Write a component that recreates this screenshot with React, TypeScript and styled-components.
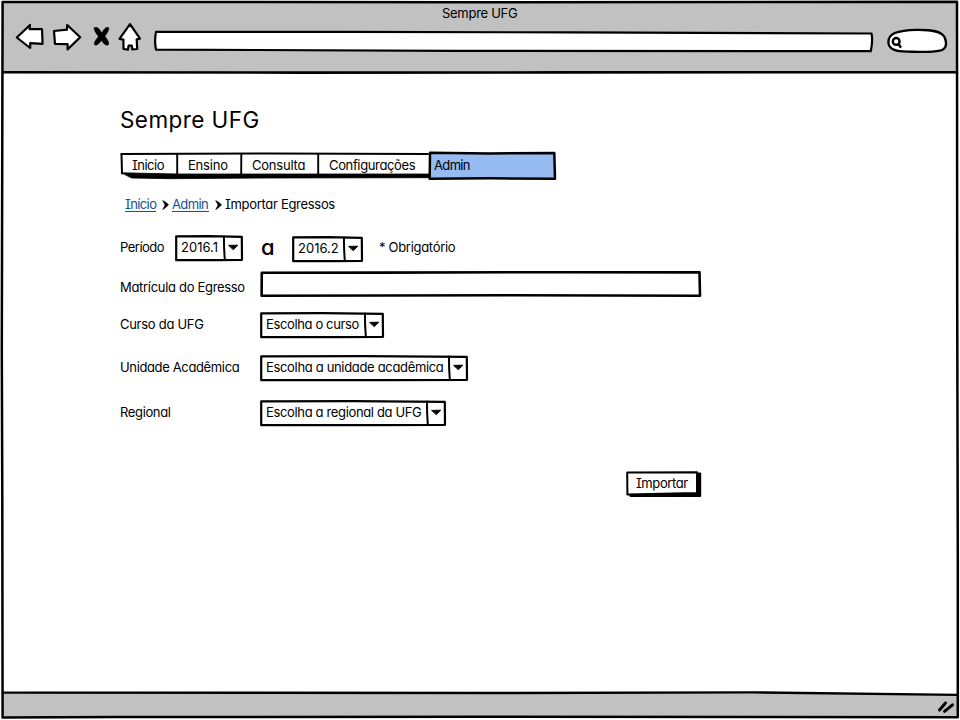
import React from 'react';
import styled, { createGlobalStyle } from 'styled-components';

const GlobalStyle = createGlobalStyle`
  * { box-sizing: border-box; }
  html, body { margin: 0; padding: 0; background: #fff; }
  body {
    font-family: Inter, "Noto Sans", sans-serif;
    font-feature-settings: "cv11", "cv08";
    font-size: 13px;
    line-height: 16px;
    color: #000;
    overflow: hidden;
  }
`;

const Window = styled.div`
  position: relative;
  display: flex;
  flex-direction: column;
  width: 960px;
  height: 720px;
  padding: 2px;
`;

const Ink = styled.svg`
  position: absolute;
  left: 0;
  top: 0;
  width: 100%;
  height: 100%;
  overflow: visible;
  pointer-events: none;
  fill: none;
  stroke: #000;
  stroke-linejoin: round;
  stroke-linecap: round;
`;

const Header = styled.header`
  position: relative;
  height: 70px;
  background: #c1c1c1;
`;

const WindowTitle = styled.div<{ $ls: number }>`
  padding: 3px 0 0 440px;
  letter-spacing: ${p => p.$ls}px;
  white-space: pre;
`;

const Toolbar = styled.div`
  display: flex;
  align-items: flex-start;
  padding: 2px 0 0 13px;
`;

const ToolIcon = styled.svg<{ $gap: number }>`
  flex: none;
  margin-right: ${p => p.$gap}px;
  overflow: visible;
  fill: #fff;
  stroke: #000;
  stroke-width: 2.2;
  stroke-linejoin: round;
  stroke-linecap: round;
`;

const AddressBar = styled.div`
  position: relative;
  width: 720px;
  height: 22px;
  margin: 7px 14px 0 0;
`;

const SearchField = styled.div`
  position: relative;
  width: 60px;
  height: 25px;
  margin-top: 6px;
`;

const Main = styled.main`
  display: flex;
  flex-direction: column;
  flex: 1;
  padding: 34px 0 0 118px;
`;

const Footer = styled.footer`
  position: relative;
  height: 26px;
`;

const Heading = styled.h1`
  margin: 0;
  font-size: 22.5px;
  font-weight: 400;
  line-height: 28px;
  letter-spacing: 0.42px;
  white-space: pre;
`;

const Nav = styled.nav`
  position: relative;
  display: flex;
  width: 436px;
  height: 30px;
  margin-top: 16px;
`;

const Tab = styled.a<{ $w: number; $pad: number; $ls?: number }>`
  position: relative;
  width: ${p => p.$w}px;
  padding: 7px 0 0 ${p => p.$pad}px;
  letter-spacing: ${p => p.$ls ?? 0}px;
  white-space: pre;
`;

const Crumbs = styled.div`
  display: flex;
  height: 16px;
  margin: 16px 0 0 5px;
`;

const Crumb = styled.span<{ $w: number; $link?: boolean; $ls?: number }>`
  flex: none;
  width: ${p => p.$w}px;
  letter-spacing: ${p => p.$ls ?? 0}px;
  color: ${p => (p.$link ? '#11519b' : '#000')};
  height: 16px;
  border-bottom: ${p => (p.$link ? '1px solid #11519b' : '0')};
  white-space: nowrap;
`;

const Separator = styled.svg`
  flex: none;
  width: 7px;
  height: 10px;
  margin: 4px 3px 0 6px;
  fill: #000;
  stroke: #000;
  stroke-width: 0.5;
`;

const Row = styled.div<{ $top: number; $h: number }>`
  display: flex;
  align-items: flex-start;
  height: ${p => p.$h}px;
  margin-top: ${p => p.$top}px;
`;

const Label = styled.label<{ $w: number; $top: number; $left?: number; $ls?: number }>`
  width: ${p => p.$w}px;
  padding: ${p => p.$top}px 0 0 ${p => p.$left ?? 0}px;
  letter-spacing: ${p => p.$ls ?? 0}px;
  white-space: pre;
`;

const Until = styled.span`
  width: 49px;
  padding-left: 18px;
  font-size: 22px;
  font-weight: 500;
  line-height: 24px;
`;

const SelectBox = styled.div<{ $w: number; $ls: number; $drop: number }>`
  position: relative;
  width: ${p => p.$w}px;
  height: 26px;
  margin-top: ${p => p.$drop}px;
  padding: 4px 0 0 6px;
  letter-spacing: ${p => p.$ls}px;
  white-space: pre;
`;

const TextInput = styled.div`
  position: relative;
  width: 441px;
  height: 26px;
`;

const Button = styled.div`
  position: relative;
  width: 76px;
  height: 26px;
  margin: 45px 0 0 506px;
  padding: 4px 0 0 10px;
`;

const ButtonText = styled.span`
  position: relative;
  letter-spacing: -0.4px;
`;

function Select({ w, text, ls = 0, drop = 0 }: { w: number; text: string; ls?: number; drop?: number }) {
  return (
    <SelectBox $w={w} $ls={ls} $drop={drop}>
      <Ink strokeWidth="2.2">
        <path d={`M1.2 1.4 L${w * 0.5} 1.1 L${w - 1.2} 1.8 L${w - 1} 24.8 L${w * 0.6} 25.2 L1.2 25.2 Z`} />
        <path d={`M${w - 19} 1.5 Q${w - 19.2} 12 ${w - 18.2} 24.5`} strokeWidth="2" />
        <path d={`M${w - 14} 10.4 L${w - 5.3} 10.2 L${w - 9.5} 14.4 Z`} fill="#000" strokeWidth="1" />
      </Ink>
      {text}
    </SelectBox>
  );
}

const Chevron = () => (
  <Separator viewBox="0 0 7 10">
    <path d="M0.6 0.4 L3.8 2.2 L6.6 4.8 L3.8 7.6 L0.7 9.7 L3 5 Z" />
  </Separator>
);

export default function App() {
  return (
    <>
      <GlobalStyle />
      <Window>
        <Header>
          <WindowTitle $ls={-0.28}>Sempre UFG</WindowTitle>
          <Toolbar>
            <ToolIcon $gap={8} width="29" height="27" viewBox="0 0 29 27">
              <path d="M1.8 14.5 L15 2 L14.6 6.2 L27 6.2 L27.6 20.8 L15.2 20.2 L15.2 25 Z" />
            </ToolIcon>
            <ToolIcon $gap={12} width="29" height="27" viewBox="0 0 29 27">
              <path d="M2 8 L15 6.6 L15.2 2 L28.2 14.3 L15.6 26.4 L15.6 21.2 L3 21 Z" />
            </ToolIcon>
            <ToolIcon $gap={7} width="18" height="27" viewBox="0 0 18 27">
              <path
                d="M1.2 4.7 Q4 3.2 6.2 6 L8.8 10 Q12 3.4 15.5 4.5 Q17 6.5 11.9 13.2 Q17.5 20.5 15 22 Q12.3 23.2 8.4 17.5 Q4 23.5 1.6 21.8 Q0 20 5.4 13.4 Q0.6 7.5 1.2 4.7 Z"
                fill="#000"
                strokeWidth="0.5"
              />
            </ToolIcon>
            <ToolIcon $gap={12} width="23" height="27" viewBox="0 0 23 27">
              <path d="M12 1.2 L22 15.6 L18.7 16.4 L19.2 26 L14.4 26.5 L13.7 22.5 L10.6 22.7 L10 26.7 L5.5 26 L5.4 16.6 L1.5 15.8 Z" />
            </ToolIcon>
            <AddressBar>
              <Ink strokeWidth="2.2">
                <path fill="#fff" d="M3 1.9 L190 1.8 L420 2.4 L718.5 3.5 Q720 11 717.8 21.2 L300 20.8 L3 19.6 Q1.2 11 3 1.9 Z" />
              </Ink>
            </AddressBar>
            <SearchField>
              <Ink strokeWidth="2.3">
                <path
                  fill="#fff"
                  d="M1.4 13 C1.4 5 9 1.2 30 0.8 C46 0.6 54 2.4 57.5 8 C60 14 60 20 53 21.6 C42 24 32 22.8 16 22.4 C7 22 1.4 19 1.4 13 Z"
                />
                <circle cx="9.2" cy="12.4" r="3.4" strokeWidth="2.4" />
                <path d="M11.6 15.2 L13.4 17.8" strokeWidth="2.6" />
              </Ink>
            </SearchField>
          </Toolbar>
        </Header>

        <Main>
          <Heading>Sempre UFG</Heading>

          <Nav>
            <Ink strokeWidth="2">
              <path d="M1.5 4 L150 3.5 L308 3.9" strokeWidth="2" />
              <path d="M1.5 4 L2 23.5" />
              <path d="M1.5 22.8 L58 24 L309 24 L309 27.7 L150 28 L50 28.7 L12 28 Z" fill="#000" strokeWidth="0.8" />
              <path d="M57.2 4 V25 M121.3 4 L121.2 25 M198.2 4 V25" strokeWidth="1.9" />
              <path d="M310 2.7 L370 3.4 L434.3 2.9 L435 28.8 L370 28.3 L309.7 28.8 Z" fill="#95bbf2" strokeWidth="2.5" />
            </Ink>
            <Tab $w={57} $pad={12} $ls={-0.5}>Inicio</Tab>
            <Tab $w={64} $pad={11} $ls={-0.2}>Ensino</Tab>
            <Tab $w={77} $pad={11} $ls={-0.22}>Consulta</Tab>
            <Tab $w={111} $pad={11} $ls={-0.36}>Configurações</Tab>
            <Tab $w={127} $pad={5} $ls={-0.65}>Admin</Tab>
          </Nav>

          <Crumbs>
            <Crumb $w={31} $link $ls={-0.6}>Início</Crumb>
            <Chevron />
            <Crumb $w={37} $link $ls={-0.6}>Admin</Crumb>
            <Chevron />
            <Crumb $w={112} $ls={-0.3}>Importar Egressos</Crumb>
          </Crumbs>

          <Row $top={23} $h={27}>
            <Label $w={55} $top={4} $ls={-0.5}>Período</Label>
            <Select w={68} text="2016.1" />
            <Until>a</Until>
            <Select w={71} text="2016.2" drop={1} />
            <Label $w={100} $top={4} $left={16} $ls={-0.3}>* Obrigatório</Label>
          </Row>
          <Row $top={9} $h={26}>
            <Label $w={140} $top={8} $ls={-0.31}>Matrícula do Egresso</Label>
            <TextInput>
              <Ink strokeWidth="2.6">
                <path d="M1.8 1.7 L120 1.6 L300 1.2 L439.5 1.4 L440 24.8 L250 24.3 L1.6 24.8 Z" />
              </Ink>
            </TextInput>
          </Row>
          <Row $top={15} $h={26}>
            <Label $w={140} $top={4} $ls={-0.28}>Curso da UFG</Label>
            <Select w={124} text="Escolha o curso" ls={-0.37} />
          </Row>
          <Row $top={17} $h={26}>
            <Label $w={140} $top={4} $ls={-0.36}>Unidade Acadêmica</Label>
            <Select w={208} text="Escolha a unidade acadêmica" ls={-0.33} />
          </Row>
          <Row $top={19} $h={26}>
            <Label $w={140} $top={4} $ls={-0.36}>Regional</Label>
            <Select w={186} text="Escolha a regional da UFG" ls={-0.35} />
          </Row>

          <Button>
            <Ink strokeWidth="2">
              <path d="M4 4 L74.2 2.5 L74.2 25 L4.5 25 Z" fill="#000" />
              <path d="M1.2 1.5 L71 1.2 L71 22 L1.4 23.5 Z" fill="#fff" />
            </Ink>
            <ButtonText>Importar</ButtonText>
          </Button>
        </Main>

        <Footer>
          <Ink strokeWidth="2.4">
            <path d="M1 0.8 L640 0.8 L850 1.5 L955 3 L956 25 L1 25 Z" fill="#c1c1c1" stroke="none" />
            <path d="M1 0.6 L500 1 L750 0.4 L955 2.9" />
            <path d="M937.5 18 L943.5 11 M942.5 19.3 L950.5 12.8" strokeWidth="3" />
          </Ink>
        </Footer>

        <Ink strokeWidth="2.5">
          <path d="M2.6 2 L480 2.2 L957 1.8 L957.2 300 L957.8 560 L957.8 717.3 L480 716.8 L120 717 L2.6 717.4 L2.3 500 L1.8 350 Z" />
          <path d="M3 72.2 L300 72.6 L560 72.4 L957 72.2" strokeWidth="2.6" />
        </Ink>
      </Window>
    </>
  );
}
